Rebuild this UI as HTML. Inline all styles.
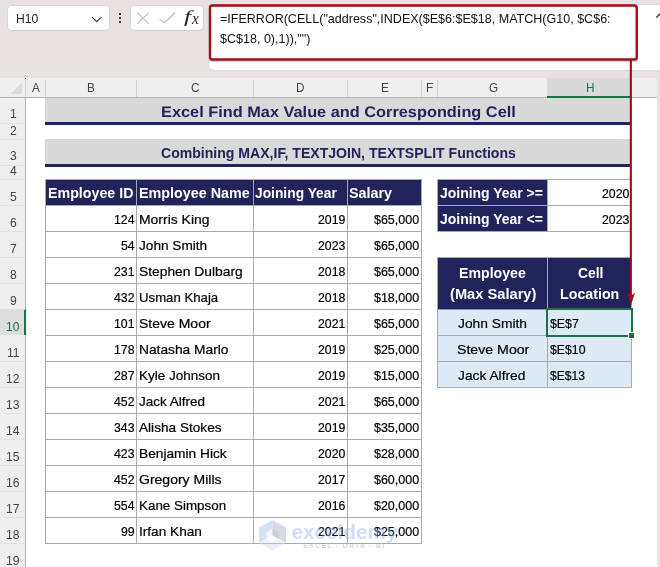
<!DOCTYPE html>
<html><head><meta charset="utf-8"><title>Excel</title>
<style>
*{margin:0;padding:0;box-sizing:border-box}
html,body{width:660px;height:567px;overflow:hidden;background:#fff}
body{position:relative;font-family:"Liberation Sans",sans-serif;color:#000}
.a{position:absolute}
.x{position:absolute;white-space:pre;line-height:20px;height:20px;transform-origin:0 0}
</style></head><body>

<div class="a" style="left:0px;top:0px;width:660px;height:78px;background:#e7e1e1;"></div>
<div class="a" style="left:8px;top:6px;width:101px;height:24px;background:#fff;border-radius:4px;box-shadow:0 0 0 .6px #d4cece,0 .8px .5px 0 #cbc5c5"></div>
<svg class="a" style="left:90px;top:15px" width="14" height="10" viewBox="0 0 14 10"><path d="M2 2.2 L6.7 6.7 L11.4 2.2" fill="none" stroke="#3a3a3a" stroke-width="1.15"/></svg>
<div class="a" style="left:118.9px;top:13.2px;width:2.2px;height:2.2px;background:#222;border-radius:.6px"></div>
<div class="a" style="left:118.9px;top:16.9px;width:2.2px;height:2.2px;background:#222;border-radius:.6px"></div>
<div class="a" style="left:118.9px;top:20.6px;width:2.2px;height:2.2px;background:#222;border-radius:.6px"></div>
<div class="a" style="left:131px;top:6px;width:72px;height:24px;background:#fff;border-radius:4px;box-shadow:0 0 0 .6px #d4cece,0 .8px .5px 0 #cbc5c5"></div>
<svg class="a" style="left:136px;top:12px" width="14" height="14" viewBox="0 0 14 14"><path d="M1.3 0.7 L12.8 11.9 M12.8 0.7 L1.3 11.9" fill="none" stroke="#bdbdbd" stroke-width="1.1"/></svg>
<svg class="a" style="left:158px;top:12px" width="18" height="14" viewBox="0 0 18 14"><path d="M1.4 6.9 L6.5 11 L17.2 0.5" fill="none" stroke="#bdbdbd" stroke-width="1.1"/></svg>
<div class="a" style="left:209px;top:5px;width:460px;height:65px;background:#fff;border-radius:0 0 0 5px;box-shadow:0 0 0 .5px #d5cfcf"></div>
<svg class="a" style="left:0;top:0;overflow:visible" width="660" height="80" viewBox="0 0 660 80"><defs><filter id="sh" x="-5%" y="-20%" width="110%" height="150%"><feDropShadow dx="0" dy="0.9" stdDeviation="0.7" flood-color="#400" flood-opacity="0.45"/></filter></defs><rect x="210.05" y="5.45" width="426.7" height="53.95" rx="2.4" fill="#fff" stroke="#a20d18" stroke-width="2.35" filter="url(#sh)"/></svg>
<svg class="a" style="left:655px;top:11px" width="12" height="8" viewBox="0 0 12 8"><path d="M1.3 6.6 L6.3 1.6 L11.3 6.6" fill="none" stroke="#333" stroke-width="1.4"/></svg>
<div class="a" style="left:0px;top:78px;width:657px;height:19px;background:#efefef;"></div>
<div class="a" style="left:0px;top:97px;width:657px;height:1px;background:#b4b4b4;"></div>
<div class="a" style="left:657px;top:71px;width:3px;height:496px;background:#e3e3e3;"></div>
<div class="a" style="left:0px;top:98px;width:25px;height:469px;background:#efefef;"></div>
<div class="a" style="left:25px;top:79px;width:1px;height:18px;background:#d4d4d4;"></div>
<div class="a" style="left:25px;top:97px;width:1px;height:470px;background:#b4b4b4;"></div>
<div class="a" style="left:25px;top:78px;width:1px;height:1px;background:#111;"></div>
<svg class="a" style="left:10px;top:82px" width="13" height="13" viewBox="0 0 13 13"><path d="M12 0.5 L12 12 L0.5 12 Z" fill="#dadada"/></svg>
<div class="a" style="left:45px;top:80px;width:1px;height:17px;background:#d2d2d2;"></div>
<div class="a" style="left:136px;top:80px;width:1px;height:17px;background:#d2d2d2;"></div>
<div class="a" style="left:253px;top:80px;width:1px;height:17px;background:#d2d2d2;"></div>
<div class="a" style="left:347px;top:80px;width:1px;height:17px;background:#d2d2d2;"></div>
<div class="a" style="left:421px;top:80px;width:1px;height:17px;background:#d2d2d2;"></div>
<div class="a" style="left:437px;top:80px;width:1px;height:17px;background:#d2d2d2;"></div>
<div class="a" style="left:547px;top:80px;width:1px;height:17px;background:#d2d2d2;"></div>
<div class="a" style="left:547px;top:78px;width:84px;height:19px;background:#d9d9d9;"></div>
<div class="a" style="left:547px;top:96px;width:84px;height:2px;background:#1e7145;"></div>
<div class="a" style="left:0px;top:123px;width:25px;height:1px;background:#e1e1e1;"></div>
<div class="a" style="left:0px;top:139px;width:25px;height:1px;background:#e1e1e1;"></div>
<div class="a" style="left:0px;top:165px;width:25px;height:1px;background:#e1e1e1;"></div>
<div class="a" style="left:0px;top:179px;width:25px;height:1px;background:#e1e1e1;"></div>
<div class="a" style="left:0px;top:205px;width:25px;height:1px;background:#e1e1e1;"></div>
<div class="a" style="left:0px;top:231px;width:25px;height:1px;background:#e1e1e1;"></div>
<div class="a" style="left:0px;top:257px;width:25px;height:1px;background:#e1e1e1;"></div>
<div class="a" style="left:0px;top:283px;width:25px;height:1px;background:#e1e1e1;"></div>
<div class="a" style="left:0px;top:309px;width:25px;height:26px;background:#dedede;"></div>
<div class="a" style="left:24px;top:309px;width:2px;height:26px;background:#1e7145;"></div>
<div class="a" style="left:0px;top:361px;width:25px;height:1px;background:#e1e1e1;"></div>
<div class="a" style="left:0px;top:387px;width:25px;height:1px;background:#e1e1e1;"></div>
<div class="a" style="left:0px;top:413px;width:25px;height:1px;background:#e1e1e1;"></div>
<div class="a" style="left:0px;top:439px;width:25px;height:1px;background:#e1e1e1;"></div>
<div class="a" style="left:0px;top:465px;width:25px;height:1px;background:#e1e1e1;"></div>
<div class="a" style="left:0px;top:491px;width:25px;height:1px;background:#e1e1e1;"></div>
<div class="a" style="left:0px;top:517px;width:25px;height:1px;background:#e1e1e1;"></div>
<div class="a" style="left:0px;top:543px;width:25px;height:1px;background:#e1e1e1;"></div>
<div class="a" style="left:0px;top:567px;width:25px;height:1px;background:#e1e1e1;"></div>
<div class="a" style="left:0px;top:309px;width:25px;height:1px;background:#e1e1e1;"></div>
<div class="a" style="left:45px;top:98px;width:586px;height:24px;background:#d9d9d9;"></div>
<div class="a" style="left:45px;top:122px;width:586px;height:3px;background:#23235b;"></div>
<div class="a" style="left:45px;top:139px;width:586px;height:25px;background:#d9d9d9;"></div>
<div class="a" style="left:45px;top:164px;width:586px;height:3px;background:#23235b;"></div>
<div class="a" style="left:45px;top:179px;width:377px;height:26px;background:#23235b;"></div>
<div class="a" style="left:45px;top:179px;width:377px;height:1px;background:#a9a9a9;"></div>
<div class="a" style="left:45px;top:205px;width:377px;height:1px;background:#a9a9a9;"></div>
<div class="a" style="left:45px;top:231px;width:377px;height:1px;background:#a9a9a9;"></div>
<div class="a" style="left:45px;top:257px;width:377px;height:1px;background:#a9a9a9;"></div>
<div class="a" style="left:45px;top:283px;width:377px;height:1px;background:#a9a9a9;"></div>
<div class="a" style="left:45px;top:309px;width:377px;height:1px;background:#a9a9a9;"></div>
<div class="a" style="left:45px;top:335px;width:377px;height:1px;background:#a9a9a9;"></div>
<div class="a" style="left:45px;top:361px;width:377px;height:1px;background:#a9a9a9;"></div>
<div class="a" style="left:45px;top:387px;width:377px;height:1px;background:#a9a9a9;"></div>
<div class="a" style="left:45px;top:413px;width:377px;height:1px;background:#a9a9a9;"></div>
<div class="a" style="left:45px;top:439px;width:377px;height:1px;background:#a9a9a9;"></div>
<div class="a" style="left:45px;top:465px;width:377px;height:1px;background:#a9a9a9;"></div>
<div class="a" style="left:45px;top:491px;width:377px;height:1px;background:#a9a9a9;"></div>
<div class="a" style="left:45px;top:517px;width:377px;height:1px;background:#a9a9a9;"></div>
<div class="a" style="left:45px;top:543px;width:377px;height:1px;background:#a9a9a9;"></div>
<div class="a" style="left:45px;top:179px;width:1px;height:365px;background:#a9a9a9;"></div>
<div class="a" style="left:136px;top:179px;width:1px;height:365px;background:#a9a9a9;"></div>
<div class="a" style="left:253px;top:179px;width:1px;height:365px;background:#a9a9a9;"></div>
<div class="a" style="left:347px;top:179px;width:1px;height:365px;background:#a9a9a9;"></div>
<div class="a" style="left:421px;top:179px;width:1px;height:365px;background:#a9a9a9;"></div>
<div class="a" style="left:437px;top:179px;width:111px;height:53px;background:#23235b;"></div>
<div class="a" style="left:437px;top:179px;width:195px;height:1px;background:#a9a9a9;"></div>
<div class="a" style="left:437px;top:205px;width:195px;height:1px;background:#a9a9a9;"></div>
<div class="a" style="left:437px;top:231px;width:195px;height:1px;background:#a9a9a9;"></div>
<div class="a" style="left:437px;top:179px;width:1px;height:53px;background:#a9a9a9;"></div>
<div class="a" style="left:547px;top:179px;width:1px;height:53px;background:#a9a9a9;"></div>
<div class="a" style="left:437px;top:257px;width:195px;height:52px;background:#23235b;"></div>
<div class="a" style="left:437px;top:309px;width:195px;height:78px;background:#ddeaf6;"></div>
<div class="a" style="left:437px;top:257px;width:195px;height:1px;background:#a9a9a9;"></div>
<div class="a" style="left:437px;top:335px;width:195px;height:1px;background:#a9a9a9;"></div>
<div class="a" style="left:437px;top:361px;width:195px;height:1px;background:#a9a9a9;"></div>
<div class="a" style="left:437px;top:387px;width:195px;height:1px;background:#a9a9a9;"></div>
<div class="a" style="left:437px;top:309px;width:195px;height:1px;background:#8f90a8;"></div>
<div class="a" style="left:437px;top:257px;width:1px;height:131px;background:#a9a9a9;"></div>
<div class="a" style="left:547px;top:257px;width:1px;height:131px;background:#a9a9a9;"></div>
<div class="a" style="left:631px;top:257px;width:1px;height:131px;background:#a9a9a9;"></div>
<div class="a" style="left:546px;top:308px;width:87px;height:28.5px;border:2px solid #1e7145"></div>
<div class="a" style="left:628px;top:332px;width:7px;height:7px;background:#fff;"></div>
<div class="a" style="left:629px;top:333px;width:5px;height:5px;background:#1e7145;"></div>
<svg class="a" style="left:0;top:0" width="660" height="320" viewBox="0 0 660 320"><rect x="629.8" y="59" width="2.1" height="236" fill="#a20d18"/></svg>
<svg class="a" style="left:625px;top:290px" width="12" height="18" viewBox="0 0 12 18"><path d="M2 2.4 Q4.5 4.9 6.1 4.9 Q7.8 4.9 10.2 2.4 Q8 8.5 6.1 15 Q4.2 8.5 2 2.4 Z" fill="#a20d18"/></svg>
<span class="x" style="left:15.50px;top:10.00px;font-size:12.1px;line-height:18px;height:18px;color:#222;transform:scale(1.0018,1);transform-origin:0 13px;">H10</span>
<span class="x" style="left:220.00px;top:10.00px;font-size:12.2px;line-height:18px;height:18px;color:#111;transform:scale(1.0280,1);transform-origin:0 13px;">=IFERROR(CELL("address",INDEX($E$6:$E$18, MATCH(G10, $C$6:</span>
<span class="x" style="left:219.80px;top:30.00px;font-size:12.2px;line-height:18px;height:18px;color:#111;transform:scale(1.0280,1);transform-origin:0 13px;">$C$18, 0),1)),"")</span>
<span class="x" style="left:184.00px;top:4.00px;font-size:17.5px;line-height:24px;height:24px;color:#222;transform:scale(1.4286,1);transform-origin:0 18px;font-style:italic;font-family:'Liberation Serif';">f</span>
<span class="x" style="left:191.68px;top:6.00px;font-size:17.5px;line-height:24px;height:24px;color:#222;transform:scale(0.8778,1);transform-origin:0 18px;font-style:italic;font-family:'Liberation Serif';">x</span>
<span class="x" style="left:31.83px;top:79.00px;font-size:12.4px;line-height:18px;height:18px;color:#444;transform:scale(0.9500,1);transform-origin:0 13px;">A</span>
<span class="x" style="left:87.32px;top:79.00px;font-size:12.4px;line-height:18px;height:18px;color:#444;transform:scale(0.9500,1);transform-origin:0 13px;">B</span>
<span class="x" style="left:191.32px;top:79.00px;font-size:12.4px;line-height:18px;height:18px;color:#444;transform:scale(0.9500,1);transform-origin:0 13px;">C</span>
<span class="x" style="left:296.35px;top:79.00px;font-size:12.4px;line-height:18px;height:18px;color:#444;transform:scale(0.9500,1);transform-origin:0 13px;">D</span>
<span class="x" style="left:380.83px;top:79.00px;font-size:12.4px;line-height:18px;height:18px;color:#444;transform:scale(0.9500,1);transform-origin:0 13px;">E</span>
<span class="x" style="left:425.83px;top:79.00px;font-size:12.4px;line-height:18px;height:18px;color:#444;transform:scale(0.9500,1);transform-origin:0 13px;">F</span>
<span class="x" style="left:488.83px;top:79.00px;font-size:12.4px;line-height:18px;height:18px;color:#444;transform:scale(0.9500,1);transform-origin:0 13px;">G</span>
<span class="x" style="left:585.83px;top:79.00px;font-size:12.4px;line-height:18px;height:18px;color:#1e7145;transform:scale(0.9500,1);transform-origin:0 13px;">H</span>
<span class="x" style="left:9.54px;top:105.00px;font-size:12.6px;line-height:18px;height:18px;color:#444;transform:scale(0.9600,1);transform-origin:0 13px;">1</span>
<span class="x" style="left:9.54px;top:122.00px;font-size:12.6px;line-height:18px;height:18px;color:#444;transform:scale(0.9600,1);transform-origin:0 13px;">2</span>
<span class="x" style="left:9.54px;top:147.00px;font-size:12.6px;line-height:18px;height:18px;color:#444;transform:scale(0.9600,1);transform-origin:0 13px;">3</span>
<span class="x" style="left:9.54px;top:162.00px;font-size:12.6px;line-height:18px;height:18px;color:#444;transform:scale(0.9600,1);transform-origin:0 13px;">4</span>
<span class="x" style="left:9.54px;top:188.00px;font-size:12.6px;line-height:18px;height:18px;color:#444;transform:scale(0.9600,1);transform-origin:0 13px;">5</span>
<span class="x" style="left:9.54px;top:214.00px;font-size:12.6px;line-height:18px;height:18px;color:#444;transform:scale(0.9600,1);transform-origin:0 13px;">6</span>
<span class="x" style="left:9.54px;top:240.00px;font-size:12.6px;line-height:18px;height:18px;color:#444;transform:scale(0.9600,1);transform-origin:0 13px;">7</span>
<span class="x" style="left:9.54px;top:266.00px;font-size:12.6px;line-height:18px;height:18px;color:#444;transform:scale(0.9600,1);transform-origin:0 13px;">8</span>
<span class="x" style="left:9.54px;top:292.00px;font-size:12.6px;line-height:18px;height:18px;color:#444;transform:scale(0.9600,1);transform-origin:0 13px;">9</span>
<span class="x" style="left:6.18px;top:318.00px;font-size:12.6px;line-height:18px;height:18px;color:#1e7145;transform:scale(0.9600,1);transform-origin:0 13px;">10</span>
<span class="x" style="left:6.63px;top:344.00px;font-size:12.6px;line-height:18px;height:18px;color:#444;transform:scale(0.9600,1);transform-origin:0 13px;">11</span>
<span class="x" style="left:6.18px;top:370.00px;font-size:12.6px;line-height:18px;height:18px;color:#444;transform:scale(0.9600,1);transform-origin:0 13px;">12</span>
<span class="x" style="left:6.18px;top:396.00px;font-size:12.6px;line-height:18px;height:18px;color:#444;transform:scale(0.9600,1);transform-origin:0 13px;">13</span>
<span class="x" style="left:6.18px;top:422.00px;font-size:12.6px;line-height:18px;height:18px;color:#444;transform:scale(0.9600,1);transform-origin:0 13px;">14</span>
<span class="x" style="left:6.18px;top:448.00px;font-size:12.6px;line-height:18px;height:18px;color:#444;transform:scale(0.9600,1);transform-origin:0 13px;">15</span>
<span class="x" style="left:6.18px;top:474.00px;font-size:12.6px;line-height:18px;height:18px;color:#444;transform:scale(0.9600,1);transform-origin:0 13px;">16</span>
<span class="x" style="left:6.18px;top:500.00px;font-size:12.6px;line-height:18px;height:18px;color:#444;transform:scale(0.9600,1);transform-origin:0 13px;">17</span>
<span class="x" style="left:6.18px;top:526.00px;font-size:12.6px;line-height:18px;height:18px;color:#444;transform:scale(0.9600,1);transform-origin:0 13px;">18</span>
<span class="x" style="left:6.18px;top:552.00px;font-size:12.6px;line-height:18px;height:18px;color:#444;transform:scale(0.9600,1);transform-origin:0 13px;">19</span>
<span class="x" style="left:161.23px;top:102.00px;font-size:15.3px;line-height:21px;height:21px;color:#23235b;transform:scale(1.0676,1.001);transform-origin:0 16px;font-weight:bold;text-rendering:geometricPrecision;">Excel Find Max Value and Corresponding Cell</span>
<span class="x" style="left:161.20px;top:143.00px;font-size:14.1px;line-height:20px;height:20px;color:#23235b;transform:scale(0.9982,1);transform-origin:0 15px;font-weight:bold;">Combining MAX,IF, TEXTJOIN, TEXTSPLIT Functions</span>
<span class="x" style="left:48.10px;top:183.00px;font-size:14.0px;line-height:20px;height:20px;color:#fff;transform:scale(1.0165,1);transform-origin:0 15px;font-weight:bold;">Employee ID</span>
<span class="x" style="left:139.20px;top:183.00px;font-size:14.0px;line-height:20px;height:20px;color:#fff;transform:scale(1.0242,1);transform-origin:0 15px;font-weight:bold;">Employee Name</span>
<span class="x" style="left:255.20px;top:183.00px;font-size:14.0px;line-height:20px;height:20px;color:#fff;transform:scale(0.9857,1);transform-origin:0 15px;font-weight:bold;">Joining Year</span>
<span class="x" style="left:349.30px;top:183.00px;font-size:14.0px;line-height:20px;height:20px;color:#fff;transform:scale(1.0225,1);transform-origin:0 15px;font-weight:bold;">Salary</span>
<span class="x" style="left:114.02px;top:211.00px;font-size:12.6px;line-height:18px;height:18px;color:#000;transform:scale(0.9750,1);transform-origin:0 13px;-webkit-text-stroke:.2px #000;">124</span>
<span class="x" style="left:138.60px;top:211.00px;font-size:12.6px;line-height:18px;height:18px;color:#000;transform:scale(1.1071,1);transform-origin:0 13px;-webkit-text-stroke:.2px #000;">Morris King</span>
<span class="x" style="left:317.99px;top:211.00px;font-size:12.6px;line-height:18px;height:18px;color:#000;transform:scale(0.9750,1);transform-origin:0 13px;-webkit-text-stroke:.2px #000;">2019</span>
<span class="x" style="left:374.24px;top:211.00px;font-size:12.6px;line-height:18px;height:18px;color:#000;transform:scale(0.9900,1);transform-origin:0 13px;-webkit-text-stroke:.2px #000;">$65,000</span>
<span class="x" style="left:120.85px;top:237.00px;font-size:12.6px;line-height:18px;height:18px;color:#000;transform:scale(0.9750,1);transform-origin:0 13px;-webkit-text-stroke:.2px #000;">54</span>
<span class="x" style="left:138.60px;top:237.00px;font-size:12.6px;line-height:18px;height:18px;color:#000;transform:scale(1.0810,1);transform-origin:0 13px;-webkit-text-stroke:.2px #000;">John Smith</span>
<span class="x" style="left:317.99px;top:237.00px;font-size:12.6px;line-height:18px;height:18px;color:#000;transform:scale(0.9750,1);transform-origin:0 13px;-webkit-text-stroke:.2px #000;">2023</span>
<span class="x" style="left:374.24px;top:237.00px;font-size:12.6px;line-height:18px;height:18px;color:#000;transform:scale(0.9900,1);transform-origin:0 13px;-webkit-text-stroke:.2px #000;">$65,000</span>
<span class="x" style="left:114.02px;top:263.00px;font-size:12.6px;line-height:18px;height:18px;color:#000;transform:scale(0.9750,1);transform-origin:0 13px;-webkit-text-stroke:.2px #000;">231</span>
<span class="x" style="left:138.60px;top:263.00px;font-size:12.6px;line-height:18px;height:18px;color:#000;transform:scale(1.0972,1);transform-origin:0 13px;-webkit-text-stroke:.2px #000;">Stephen Dulbarg</span>
<span class="x" style="left:317.99px;top:263.00px;font-size:12.6px;line-height:18px;height:18px;color:#000;transform:scale(0.9750,1);transform-origin:0 13px;-webkit-text-stroke:.2px #000;">2018</span>
<span class="x" style="left:374.24px;top:263.00px;font-size:12.6px;line-height:18px;height:18px;color:#000;transform:scale(0.9900,1);transform-origin:0 13px;-webkit-text-stroke:.2px #000;">$65,000</span>
<span class="x" style="left:114.02px;top:289.00px;font-size:12.6px;line-height:18px;height:18px;color:#000;transform:scale(0.9750,1);transform-origin:0 13px;-webkit-text-stroke:.2px #000;">432</span>
<span class="x" style="left:138.60px;top:289.00px;font-size:12.6px;line-height:18px;height:18px;color:#000;transform:scale(1.0477,1);transform-origin:0 13px;-webkit-text-stroke:.2px #000;">Usman Khaja</span>
<span class="x" style="left:317.99px;top:289.00px;font-size:12.6px;line-height:18px;height:18px;color:#000;transform:scale(0.9750,1);transform-origin:0 13px;-webkit-text-stroke:.2px #000;">2018</span>
<span class="x" style="left:374.24px;top:289.00px;font-size:12.6px;line-height:18px;height:18px;color:#000;transform:scale(0.9900,1);transform-origin:0 13px;-webkit-text-stroke:.2px #000;">$18,000</span>
<span class="x" style="left:114.02px;top:315.00px;font-size:12.6px;line-height:18px;height:18px;color:#000;transform:scale(0.9750,1);transform-origin:0 13px;-webkit-text-stroke:.2px #000;">101</span>
<span class="x" style="left:138.60px;top:315.00px;font-size:12.6px;line-height:18px;height:18px;color:#000;transform:scale(1.1121,1);transform-origin:0 13px;-webkit-text-stroke:.2px #000;">Steve Moor</span>
<span class="x" style="left:317.99px;top:315.00px;font-size:12.6px;line-height:18px;height:18px;color:#000;transform:scale(0.9750,1);transform-origin:0 13px;-webkit-text-stroke:.2px #000;">2021</span>
<span class="x" style="left:374.24px;top:315.00px;font-size:12.6px;line-height:18px;height:18px;color:#000;transform:scale(0.9900,1);transform-origin:0 13px;-webkit-text-stroke:.2px #000;">$65,000</span>
<span class="x" style="left:114.02px;top:341.00px;font-size:12.6px;line-height:18px;height:18px;color:#000;transform:scale(0.9750,1);transform-origin:0 13px;-webkit-text-stroke:.2px #000;">178</span>
<span class="x" style="left:138.60px;top:341.00px;font-size:12.6px;line-height:18px;height:18px;color:#000;transform:scale(1.0917,1);transform-origin:0 13px;-webkit-text-stroke:.2px #000;">Natasha Marlo</span>
<span class="x" style="left:317.99px;top:341.00px;font-size:12.6px;line-height:18px;height:18px;color:#000;transform:scale(0.9750,1);transform-origin:0 13px;-webkit-text-stroke:.2px #000;">2019</span>
<span class="x" style="left:374.24px;top:341.00px;font-size:12.6px;line-height:18px;height:18px;color:#000;transform:scale(0.9900,1);transform-origin:0 13px;-webkit-text-stroke:.2px #000;">$25,000</span>
<span class="x" style="left:114.02px;top:367.00px;font-size:12.6px;line-height:18px;height:18px;color:#000;transform:scale(0.9750,1);transform-origin:0 13px;-webkit-text-stroke:.2px #000;">287</span>
<span class="x" style="left:138.60px;top:367.00px;font-size:12.6px;line-height:18px;height:18px;color:#000;transform:scale(1.0700,1);transform-origin:0 13px;-webkit-text-stroke:.2px #000;">Kyle Johnson</span>
<span class="x" style="left:317.99px;top:367.00px;font-size:12.6px;line-height:18px;height:18px;color:#000;transform:scale(0.9750,1);transform-origin:0 13px;-webkit-text-stroke:.2px #000;">2019</span>
<span class="x" style="left:374.24px;top:367.00px;font-size:12.6px;line-height:18px;height:18px;color:#000;transform:scale(0.9900,1);transform-origin:0 13px;-webkit-text-stroke:.2px #000;">$15,000</span>
<span class="x" style="left:114.02px;top:393.00px;font-size:12.6px;line-height:18px;height:18px;color:#000;transform:scale(0.9750,1);transform-origin:0 13px;-webkit-text-stroke:.2px #000;">452</span>
<span class="x" style="left:138.60px;top:393.00px;font-size:12.6px;line-height:18px;height:18px;color:#000;transform:scale(1.0724,1);transform-origin:0 13px;-webkit-text-stroke:.2px #000;">Jack Alfred</span>
<span class="x" style="left:317.99px;top:393.00px;font-size:12.6px;line-height:18px;height:18px;color:#000;transform:scale(0.9750,1);transform-origin:0 13px;-webkit-text-stroke:.2px #000;">2021</span>
<span class="x" style="left:374.24px;top:393.00px;font-size:12.6px;line-height:18px;height:18px;color:#000;transform:scale(0.9900,1);transform-origin:0 13px;-webkit-text-stroke:.2px #000;">$65,000</span>
<span class="x" style="left:114.02px;top:419.00px;font-size:12.6px;line-height:18px;height:18px;color:#000;transform:scale(0.9750,1);transform-origin:0 13px;-webkit-text-stroke:.2px #000;">343</span>
<span class="x" style="left:138.60px;top:419.00px;font-size:12.6px;line-height:18px;height:18px;color:#000;transform:scale(1.0815,1);transform-origin:0 13px;-webkit-text-stroke:.2px #000;">Alisha Stokes</span>
<span class="x" style="left:317.99px;top:419.00px;font-size:12.6px;line-height:18px;height:18px;color:#000;transform:scale(0.9750,1);transform-origin:0 13px;-webkit-text-stroke:.2px #000;">2019</span>
<span class="x" style="left:374.24px;top:419.00px;font-size:12.6px;line-height:18px;height:18px;color:#000;transform:scale(0.9900,1);transform-origin:0 13px;-webkit-text-stroke:.2px #000;">$35,000</span>
<span class="x" style="left:114.02px;top:445.00px;font-size:12.6px;line-height:18px;height:18px;color:#000;transform:scale(0.9750,1);transform-origin:0 13px;-webkit-text-stroke:.2px #000;">423</span>
<span class="x" style="left:138.60px;top:445.00px;font-size:12.6px;line-height:18px;height:18px;color:#000;transform:scale(1.0888,1);transform-origin:0 13px;-webkit-text-stroke:.2px #000;">Benjamin Hick</span>
<span class="x" style="left:317.99px;top:445.00px;font-size:12.6px;line-height:18px;height:18px;color:#000;transform:scale(0.9750,1);transform-origin:0 13px;-webkit-text-stroke:.2px #000;">2020</span>
<span class="x" style="left:374.24px;top:445.00px;font-size:12.6px;line-height:18px;height:18px;color:#000;transform:scale(0.9900,1);transform-origin:0 13px;-webkit-text-stroke:.2px #000;">$28,000</span>
<span class="x" style="left:114.02px;top:471.00px;font-size:12.6px;line-height:18px;height:18px;color:#000;transform:scale(0.9750,1);transform-origin:0 13px;-webkit-text-stroke:.2px #000;">452</span>
<span class="x" style="left:138.60px;top:471.00px;font-size:12.6px;line-height:18px;height:18px;color:#000;transform:scale(1.1127,1);transform-origin:0 13px;-webkit-text-stroke:.2px #000;">Gregory Mills</span>
<span class="x" style="left:317.99px;top:471.00px;font-size:12.6px;line-height:18px;height:18px;color:#000;transform:scale(0.9750,1);transform-origin:0 13px;-webkit-text-stroke:.2px #000;">2017</span>
<span class="x" style="left:374.24px;top:471.00px;font-size:12.6px;line-height:18px;height:18px;color:#000;transform:scale(0.9900,1);transform-origin:0 13px;-webkit-text-stroke:.2px #000;">$60,000</span>
<span class="x" style="left:114.02px;top:497.00px;font-size:12.6px;line-height:18px;height:18px;color:#000;transform:scale(0.9750,1);transform-origin:0 13px;-webkit-text-stroke:.2px #000;">554</span>
<span class="x" style="left:138.60px;top:497.00px;font-size:12.6px;line-height:18px;height:18px;color:#000;transform:scale(1.0634,1);transform-origin:0 13px;-webkit-text-stroke:.2px #000;">Kane Simpson</span>
<span class="x" style="left:317.99px;top:497.00px;font-size:12.6px;line-height:18px;height:18px;color:#000;transform:scale(0.9750,1);transform-origin:0 13px;-webkit-text-stroke:.2px #000;">2016</span>
<span class="x" style="left:374.24px;top:497.00px;font-size:12.6px;line-height:18px;height:18px;color:#000;transform:scale(0.9900,1);transform-origin:0 13px;-webkit-text-stroke:.2px #000;">$20,000</span>
<span class="x" style="left:120.85px;top:523.00px;font-size:12.6px;line-height:18px;height:18px;color:#000;transform:scale(0.9750,1);transform-origin:0 13px;-webkit-text-stroke:.2px #000;">99</span>
<span class="x" style="left:138.60px;top:523.00px;font-size:12.6px;line-height:18px;height:18px;color:#000;transform:scale(1.0825,1);transform-origin:0 13px;-webkit-text-stroke:.2px #000;">Irfan Khan</span>
<span class="x" style="left:317.99px;top:523.00px;font-size:12.6px;line-height:18px;height:18px;color:#000;transform:scale(0.9750,1);transform-origin:0 13px;-webkit-text-stroke:.2px #000;">2021</span>
<span class="x" style="left:374.24px;top:523.00px;font-size:12.6px;line-height:18px;height:18px;color:#000;transform:scale(0.9900,1);transform-origin:0 13px;-webkit-text-stroke:.2px #000;">$25,000</span>
<span class="x" style="left:439.90px;top:183.00px;font-size:14.0px;line-height:20px;height:20px;color:#fff;transform:scale(0.9970,1);transform-origin:0 15px;font-weight:bold;">Joining Year &gt;=</span>
<span class="x" style="left:439.90px;top:209.00px;font-size:14.0px;line-height:20px;height:20px;color:#fff;transform:scale(0.9970,1);transform-origin:0 15px;font-weight:bold;">Joining Year &lt;=</span>
<span class="x" style="left:602.39px;top:185.00px;font-size:12.6px;line-height:18px;height:18px;color:#000;transform:scale(0.9750,1);transform-origin:0 13px;-webkit-text-stroke:.2px #000;">2020</span>
<span class="x" style="left:602.39px;top:211.00px;font-size:12.6px;line-height:18px;height:18px;color:#000;transform:scale(0.9750,1);transform-origin:0 13px;-webkit-text-stroke:.2px #000;">2023</span>
<span class="x" style="left:459.40px;top:263.00px;font-size:14.0px;line-height:20px;height:20px;color:#fff;transform:scale(1.0098,1);transform-origin:0 15px;font-weight:bold;">Employee</span>
<span class="x" style="left:449.90px;top:284.00px;font-size:14.0px;line-height:20px;height:20px;color:#fff;transform:scale(1.0474,1);transform-origin:0 15px;font-weight:bold;">(Max Salary)</span>
<span class="x" style="left:577.70px;top:263.00px;font-size:14.0px;line-height:20px;height:20px;color:#fff;transform:scale(0.9925,1);transform-origin:0 15px;font-weight:bold;">Cell</span>
<span class="x" style="left:560.20px;top:284.00px;font-size:14.0px;line-height:20px;height:20px;color:#fff;transform:scale(1.0159,1);transform-origin:0 15px;font-weight:bold;">Location</span>
<span class="x" style="left:458.20px;top:315.00px;font-size:12.6px;line-height:18px;height:18px;color:#000;transform:scale(1.0953,1);transform-origin:0 13px;-webkit-text-stroke:.2px #000;">John Smith</span>
<span class="x" style="left:456.50px;top:341.00px;font-size:12.6px;line-height:18px;height:18px;color:#000;transform:scale(1.1230,1);transform-origin:0 13px;-webkit-text-stroke:.2px #000;">Steve Moor</span>
<span class="x" style="left:458.20px;top:367.00px;font-size:12.6px;line-height:18px;height:18px;color:#000;transform:scale(1.0949,1);transform-origin:0 13px;-webkit-text-stroke:.2px #000;">Jack Alfred</span>
<span class="x" style="left:550.00px;top:315.00px;font-size:12.6px;line-height:18px;height:18px;color:#000;transform:scale(0.9793,1);transform-origin:0 13px;-webkit-text-stroke:.2px #000;">$E$7</span>
<span class="x" style="left:550.00px;top:341.00px;font-size:12.6px;line-height:18px;height:18px;color:#000;transform:scale(0.9750,1);transform-origin:0 13px;-webkit-text-stroke:.2px #000;">$E$10</span>
<span class="x" style="left:550.00px;top:367.00px;font-size:12.6px;line-height:18px;height:18px;color:#000;transform:scale(0.9612,1);transform-origin:0 13px;-webkit-text-stroke:.2px #000;">$E$13</span>
<svg class="a" style="left:255px;top:516px" width="150" height="40" viewBox="0 0 150 40">
<g opacity="0.42">
<path d="M17.5 4 L4 11.5 L4 27 L17.5 19.2 Z" fill="#9db9ec"/>
<path d="M17.5 4 L31 11.5 L31 27 L17.5 19.2 Z" fill="#9aa6bd"/>
<path d="M4 27 L17.5 34.5 L31 27 L17.5 19.2 Z" fill="#cfdcf5"/>
<path d="M17.5 12.5 L11.5 16 L11.5 23 L17.5 19.5 Z" fill="#dfe8fa"/>
<path d="M17.5 12.5 L23.5 16 L23.5 23 L17.5 19.5 Z" fill="#7f8ca8"/>
<path d="M11.5 23 L17.5 26.5 L23.5 23 L17.5 19.5 Z" fill="#ffffff"/>
<text x="36.5" y="23" font-family="Liberation Sans" font-weight="bold" font-size="20" fill="#8fb0ee" textLength="106" lengthAdjust="spacingAndGlyphs">exceldemy</text>
<text x="48.3" y="32" font-family="Liberation Sans" font-weight="bold" font-size="6.8" fill="#9a9a9a" textLength="81" lengthAdjust="spacing">EXCEL - DATA - BI</text></g></svg>
</body></html>
